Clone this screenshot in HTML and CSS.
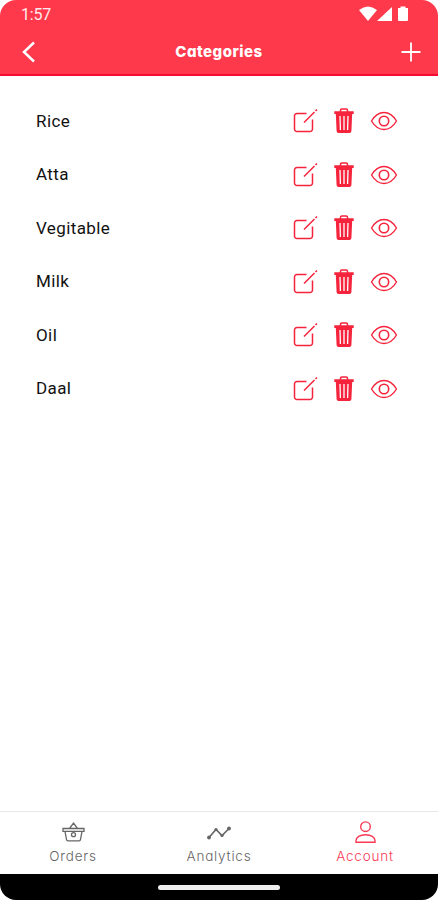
FILE: index.html
```
<!DOCTYPE html>
<html lang="en">
<head>
    <meta charset="UTF-8">
    <meta name="viewport" content="width=device-width, initial-scale=1.0">
    <title>Categories</title>
    <link rel="stylesheet" href="styles.css">
</head>
<body>
    <!-- Shared row icons -->
    <svg class="icon-defs" aria-hidden="true">
        <symbol id="icon-edit" viewBox="0 0 26 26">
            <path d="M14.500 5.500H5A2.500 2.500 0 0 0 2.500 8v13A2.500 2.500 0 0 0 5 23.500h13a2.500 2.500 0 0 0 2.500-2.500V11.500M12 14.500L22.500 4M23.500 3L25 1.500" fill="none" stroke="currentColor" stroke-width="1.5"/>
        </symbol>
        <symbol id="icon-trash" viewBox="0 0 22 26">
            <path d="M7.500 4V2.300A1.300 1.300 0 0 1 8.800 1h4.400a1.300 1.300 0 0 1 1.300 1.300V4" fill="none" stroke="currentColor" stroke-width="1.5"/>
            <path d="M1.300 3.300h19.400v2.600H1.300zM2.800 5.500h16.400l-.8 17.700a2 2 0 0 1-2 1.800H5.600a2 2 0 0 1-2-1.800z" fill="currentColor"/>
            <path d="M7 8l.4 14M11 8v14M15 8l-.4 14" fill="none" stroke="#fff" stroke-width="1.300"/>
        </symbol>
        <symbol id="icon-eye" viewBox="0 0 28 20">
            <path d="M1.500 10C5 4.200 9.300 1.500 14 1.500S23 4.200 26.500 10C23 15.800 18.700 18.500 14 18.500S5 15.800 1.500 10z" fill="none" stroke="currentColor" stroke-width="1.4"/>
            <circle cx="14" cy="10" r="4.700" fill="none" stroke="currentColor" stroke-width="1.600"/>
        </symbol>
    </svg>

    <div class="phone">
        <header class="header">
            <div class="status-bar">
                <span class="time">1:57</span>
                <svg class="status-icons" width="52" height="16" viewBox="0 0 52 16">
                    <path d="M0 4Q9-3 18 4L9 15z" fill="#fff"/>
                    <path d="M33 1v14H18z" fill="#fff"/>
                    <path d="M39 2h2.500V.5h5V2H49v12a1 1 0 0 1-1 1h-8a1 1 0 0 1-1-1z" fill="#fff"/>
                </svg>
            </div>
            <div class="title-bar">
                <svg class="back" width="16" height="24" viewBox="0 0 16 24">
                    <path d="M13 2.500L3 12l10 9.500" fill="none" stroke="#fff" stroke-width="2.500"/>
                </svg>
                <h1>Categories</h1>
                <svg class="add" width="20" height="20" viewBox="0 0 20 20">
                    <path d="M10 .5v19M.5 10h19" fill="none" stroke="#fff" stroke-width="1.800"/>
                </svg>
            </div>
        </header>

        <ul class="category-list">
            <li>
                <span class="name">Rice</span>
                <svg class="edit"><use href="#icon-edit"/></svg>
                <svg class="trash"><use href="#icon-trash"/></svg>
                <svg class="eye"><use href="#icon-eye"/></svg>
            </li>
            <li>
                <span class="name">Atta</span>
                <svg class="edit"><use href="#icon-edit"/></svg>
                <svg class="trash"><use href="#icon-trash"/></svg>
                <svg class="eye"><use href="#icon-eye"/></svg>
            </li>
            <li>
                <span class="name">Vegitable</span>
                <svg class="edit"><use href="#icon-edit"/></svg>
                <svg class="trash"><use href="#icon-trash"/></svg>
                <svg class="eye"><use href="#icon-eye"/></svg>
            </li>
            <li>
                <span class="name">Milk</span>
                <svg class="edit"><use href="#icon-edit"/></svg>
                <svg class="trash"><use href="#icon-trash"/></svg>
                <svg class="eye"><use href="#icon-eye"/></svg>
            </li>
            <li>
                <span class="name">Oil</span>
                <svg class="edit"><use href="#icon-edit"/></svg>
                <svg class="trash"><use href="#icon-trash"/></svg>
                <svg class="eye"><use href="#icon-eye"/></svg>
            </li>
            <li>
                <span class="name">Daal</span>
                <svg class="edit"><use href="#icon-edit"/></svg>
                <svg class="trash"><use href="#icon-trash"/></svg>
                <svg class="eye"><use href="#icon-eye"/></svg>
            </li>
        </ul>

        <nav class="tabs">
            <a class="tab orders">
                <svg width="24" height="24" viewBox="0 0 24 24" fill="none" stroke="currentColor" stroke-width="1.300">
                    <path d="M2 8.500h21v2.800H2zM4 11.300l1.500 8.200a1.500 1.500 0 0 0 1.500 1.300h11a1.500 1.500 0 0 0 1.500-1.300l1.500-8.200M8.500 8.500l4-5.500 4 5.500"/>
                    <circle cx="12.500" cy="14.700" r="2"/>
                </svg>
                <span>Orders</span>
            </a>
            <a class="tab analytics">
                <svg width="24" height="24" viewBox="0 0 24 24" fill="none" stroke="currentColor" stroke-width="1.600">
                    <path d="M2 17.500l7-8 6 6L22 8.500"/>
                    <g fill="currentColor" stroke="none">
                        <circle cx="2" cy="17.500" r="1.900"/>
                        <circle cx="9" cy="9.500" r="1.600"/>
                        <circle cx="15" cy="15.500" r="1.600"/>
                        <circle cx="22" cy="8.500" r="1.900"/>
                    </g>
                </svg>
                <span>Analytics</span>
            </a>
            <a class="tab account active">
                <svg width="24" height="24" viewBox="0 0 24 24" fill="none" stroke="currentColor" stroke-width="1.400">
                    <circle cx="12.500" cy="6.700" r="4.800"/>
                    <path d="M3 22.300v-1.500c0-3.600 4-6 9.500-6s9.500 2.400 9.500 6v1.500z"/>
                </svg>
                <span>Account</span>
            </a>
        </nav>

        <div class="gesture-bar"><div class="handle"></div></div>
    </div>
</body>
</html>
```
FILE: styles.css
```
* {
    box-sizing: border-box;
}
body {
    margin: 0;
    background-color: #fff;
    font-family: Roboto, sans-serif;
}
.icon-defs {
    display: none;
}
.phone {
    display: flex;
    flex-direction: column;
    height: 900px;
    background-color: #fff;
    border-radius: 16px;
    overflow: hidden;
}
svg {
    display: block;
    flex: none;
}

/* Header */
.header {
    height: 76px;
    background-color: #ff394c;
    border-bottom: 2px solid #f80b30;
    color: #fff;
}
.status-bar {
    display: flex;
    justify-content: space-between;
    height: 28px;
    padding: 6px 27px 0 21px;
}
.time {
    font-size: 16px;
    line-height: 18px;
    letter-spacing: -0.2px;
    opacity: 0.9;
}
.title-bar {
    display: flex;
    align-items: center;
    justify-content: space-between;
    height: 48px;
    padding: 0 17px 0 21px;
}
.title-bar h1 {
    margin: 0;
    padding-bottom: 2px;
    font-family: Inter, sans-serif;
    font-feature-settings: "cv11";
    font-size: 15px;
    font-weight: 800;
    letter-spacing: 0.5px;
}

/* Category rows */
.category-list {
    flex: 1;
    margin: 0;
    padding: 18.5px 40px 0 36px;
    list-style: none;
}
.category-list li {
    display: flex;
    align-items: center;
    height: 53.5px;
    color: #f5233b;
}
.name {
    flex: 1;
    padding-bottom: 1px;
    color: #111;
    font-size: 17px;
    letter-spacing: 0.4px;
}
.edit {
    width: 26px;
    height: 26px;
    margin-right: 15px;
}
.trash {
    width: 22px;
    height: 26px;
    margin-right: 15px;
}
.eye {
    width: 28px;
    height: 20px;
}

/* Bottom tabs */
.tabs {
    display: grid;
    grid-template-columns: repeat(3, 1fr);
    height: 63px;
    border-top: 1px solid #e8e8e8;
}
.tab {
    display: flex;
    flex-direction: column;
    align-items: center;
    padding-top: 8px;
    color: #666;
    font-family: Inter, sans-serif;
    font-feature-settings: "cv11";
    font-size: 13.5px;
    font-weight: 300;
    line-height: 16px;
    letter-spacing: 0.8px;
}
.tab span {
    margin-top: 4px;
}
.tab.active {
    color: #fa3a55;
}
.gesture-bar {
    display: flex;
    justify-content: center;
    height: 26px;
    padding-top: 11px;
    background-color: #000;
}
.handle {
    width: 122px;
    height: 5px;
    background-color: #eee;
    border-radius: 3px;
}
```
